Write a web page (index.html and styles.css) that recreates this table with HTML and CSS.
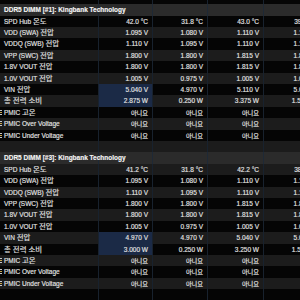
FILE: index.html
```html
<!DOCTYPE html>
<html lang="ko">
<head>
<meta charset="utf-8">
<link rel="stylesheet" href="styles.css">
</head>
<body>
<div class="sheet">
  <div class="row k"><div class="c lbl"></div><div class="c"></div><div class="c"></div><div class="c"></div><div class="c"></div></div>

  <div class="row hd"><div class="c lbl">DDR5 DIMM [#1]: Kingbank Technology</div><div class="c"></div><div class="c"></div><div class="c"></div><div class="c"></div></div>
  <div class="row k"><div class="c lbl">SPD Hub <span class="ko">온도</span></div><div class="c">42.0 °C</div><div class="c">31.8 °C</div><div class="c">43.0 °C</div><div class="c">39.6 °C</div></div>
  <div class="row g"><div class="c lbl">VDD (SWA) <span class="ko">전압</span></div><div class="c">1.095 V</div><div class="c">1.080 V</div><div class="c">1.110 V</div><div class="c">1.101 V</div></div>
  <div class="row k"><div class="c lbl">VDDQ (SWB) <span class="ko">전압</span></div><div class="c">1.110 V</div><div class="c">1.095 V</div><div class="c">1.110 V</div><div class="c">1.106 V</div></div>
  <div class="row g"><div class="c lbl">VPP (SWC) <span class="ko">전압</span></div><div class="c">1.800 V</div><div class="c">1.800 V</div><div class="c">1.815 V</div><div class="c">1.806 V</div></div>
  <div class="row k"><div class="c lbl">1.8V VOUT <span class="ko">전압</span></div><div class="c">1.800 V</div><div class="c">1.800 V</div><div class="c">1.815 V</div><div class="c">1.804 V</div></div>
  <div class="row g"><div class="c lbl">1.0V VOUT <span class="ko">전압</span></div><div class="c">1.005 V</div><div class="c">0.975 V</div><div class="c">1.005 V</div><div class="c">1.001 V</div></div>
  <div class="row k"><div class="c lbl">VIN <span class="ko">전압</span></div><div class="c hl">5.040 V</div><div class="c">4.970 V</div><div class="c">5.110 V</div><div class="c">5.043 V</div></div>
  <div class="row g"><div class="c lbl"><span class="ko">총 전력 소비</span></div><div class="c hl">2.875 W</div><div class="c">0.250 W</div><div class="c">3.375 W</div><div class="c">1.562 W</div></div>
  <div class="row k"><div class="c lbl ic">PMIC <span class="ko">고온</span></div><div class="c no">아니요</div><div class="c no">아니요</div><div class="c no">아니요</div><div class="c"></div></div>
  <div class="row g"><div class="c lbl ic">PMIC Over Voltage</div><div class="c no">아니요</div><div class="c no">아니요</div><div class="c no">아니요</div><div class="c"></div></div>
  <div class="row k"><div class="c lbl ic">PMIC Under Voltage</div><div class="c no">아니요</div><div class="c no">아니요</div><div class="c no">아니요</div><div class="c"></div></div>
  <div class="row g"><div class="c lbl"></div><div class="c"></div><div class="c"></div><div class="c"></div><div class="c"></div></div>

  <div class="row hd"><div class="c lbl">DDR5 DIMM [#3]: Kingbank Technology</div><div class="c"></div><div class="c"></div><div class="c"></div><div class="c"></div></div>
  <div class="row g"><div class="c lbl">SPD Hub <span class="ko">온도</span></div><div class="c">41.2 °C</div><div class="c">31.8 °C</div><div class="c">42.2 °C</div><div class="c">38.9 °C</div></div>
  <div class="row k"><div class="c lbl">VDD (SWA) <span class="ko">전압</span></div><div class="c">1.095 V</div><div class="c">1.080 V</div><div class="c">1.110 V</div><div class="c">1.101 V</div></div>
  <div class="row g"><div class="c lbl">VDDQ (SWB) <span class="ko">전압</span></div><div class="c">1.110 V</div><div class="c">1.095 V</div><div class="c">1.110 V</div><div class="c">1.106 V</div></div>
  <div class="row k"><div class="c lbl">VPP (SWC) <span class="ko">전압</span></div><div class="c">1.800 V</div><div class="c">1.800 V</div><div class="c">1.815 V</div><div class="c">1.806 V</div></div>
  <div class="row g"><div class="c lbl">1.8V VOUT <span class="ko">전압</span></div><div class="c">1.800 V</div><div class="c">1.800 V</div><div class="c">1.815 V</div><div class="c">1.804 V</div></div>
  <div class="row k"><div class="c lbl">1.0V VOUT <span class="ko">전압</span></div><div class="c">1.005 V</div><div class="c">0.975 V</div><div class="c">1.005 V</div><div class="c">1.001 V</div></div>
  <div class="row g"><div class="c lbl">VIN <span class="ko">전압</span></div><div class="c hl">4.970 V</div><div class="c">4.970 V</div><div class="c">5.040 V</div><div class="c">5.012 V</div></div>
  <div class="row k"><div class="c lbl"><span class="ko">총 전력 소비</span></div><div class="c hl">3.000 W</div><div class="c">0.250 W</div><div class="c">3.250 W</div><div class="c">1.531 W</div></div>
  <div class="row g"><div class="c lbl ic">PMIC <span class="ko">고온</span></div><div class="c no">아니요</div><div class="c no">아니요</div><div class="c no">아니요</div><div class="c"></div></div>
  <div class="row k"><div class="c lbl ic">PMIC Over Voltage</div><div class="c no">아니요</div><div class="c no">아니요</div><div class="c no">아니요</div><div class="c"></div></div>
  <div class="row g"><div class="c lbl ic">PMIC Under Voltage</div><div class="c no">아니요</div><div class="c no">아니요</div><div class="c no">아니요</div><div class="c"></div></div>
  <div class="row k"><div class="c lbl"></div><div class="c"></div><div class="c"></div><div class="c"></div><div class="c"></div></div>
</div>
</body>
</html>
```
FILE: styles.css
```css
html, body {
  margin: 0;
  padding: 0;
  background: #000;
  overflow: hidden;
}
body {
  width: 300px;
  height: 300px;
  font-family: "Liberation Sans", "Noto Sans CJK KR", sans-serif;
  font-size: 6.5px;
  color: #e4e4e4;
  -webkit-text-stroke: 0.15px currentColor;
}
.sheet {
  margin-top: -7.1px;
  width: 320px;
}
.row {
  display: grid;
  grid-template-columns: 98px 54px 55px 56px 57px;
  height: 11.4px;
  line-height: 11.4px;
}
.c {
  border-left: 1px solid #18222e;
  text-align: right;
  padding-right: 4px;
  white-space: nowrap;
  overflow: hidden;
}
.lbl {
  border-left: 0;
  text-align: left;
  padding: 0 0 0 4px;
  position: relative;
}
.ko {
  font-family: "Noto Sans CJK KR", sans-serif;
  font-size: 7.4px;
  line-height: 1;
}
.no {
  font-family: "Noto Sans CJK KR", sans-serif;
  font-size: 6.2px;
}
.g { background: #1c1c1c; }
.k { background: #050505; }
.hd { background: #2b2b2b; }
.hd .lbl {
  font-weight: bold;
  color: #f4f4f4;
  overflow: visible;
  z-index: 1;
}
.hd .c { border-left-color: #1e2936; }
.hl { background: #1b2a46; }
.ic::before {
  content: "";
  position: absolute;
  left: 0;
  top: 3px;
  width: 2px;
  height: 6px;
  background:
    linear-gradient(#c9c9c9 0 1px, transparent 1px 2px, #c9a54a 2px 3px, transparent 3px 4px, #c9c9c9 4px 5px, transparent 5px);
}
```
